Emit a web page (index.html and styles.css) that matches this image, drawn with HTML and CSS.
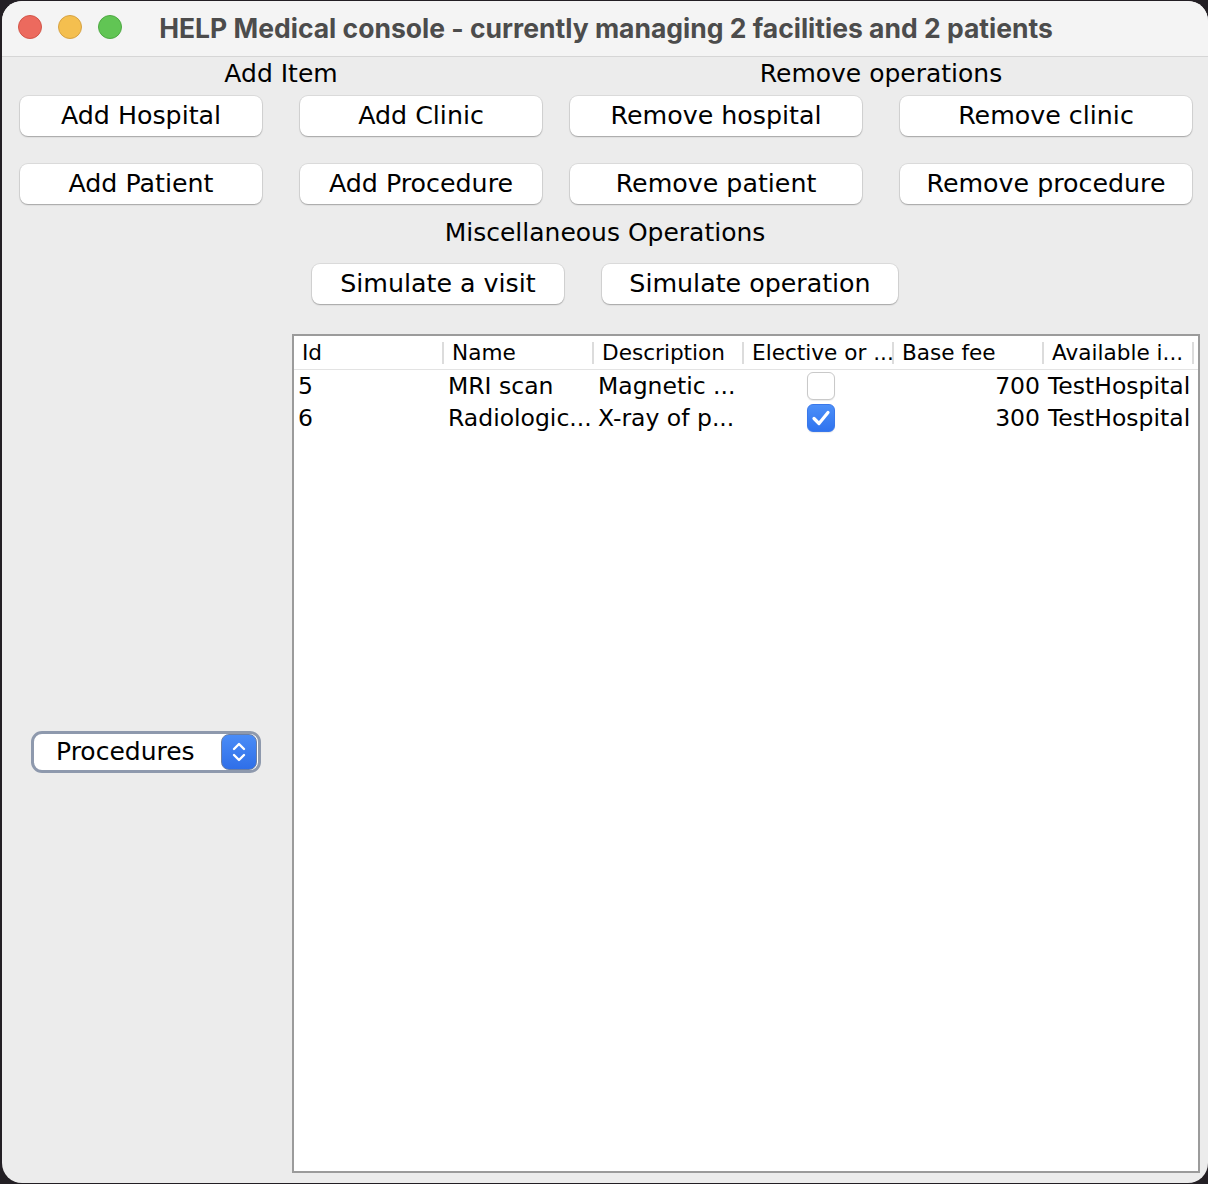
FILE: index.html
```html
<!DOCTYPE html>
<html>
<head>
<meta charset="utf-8">
<title>HELP Medical console</title>
<link rel="stylesheet" href="styles.css">
</head>
<body>
<div class="window">
  <div class="titlebar">
    <div class="lights">
      <span class="light red"></span>
      <span class="light yellow"></span>
      <span class="light green"></span>
    </div>
    <div class="title">HELP Medical console - currently managing 2 facilities and 2 patients</div>
  </div>
  <div class="content">
    <div class="top">
      <div class="group group-add">
        <div class="label">Add Item</div>
        <div class="btn-grid">
          <button class="btn">Add Hospital</button>
          <button class="btn">Add Clinic</button>
          <button class="btn">Add Patient</button>
          <button class="btn">Add Procedure</button>
        </div>
      </div>
      <div class="group group-remove">
        <div class="label">Remove operations</div>
        <div class="btn-grid">
          <button class="btn">Remove hospital</button>
          <button class="btn">Remove clinic</button>
          <button class="btn">Remove patient</button>
          <button class="btn">Remove procedure</button>
        </div>
      </div>
    </div>
    <div class="misc">
      <div class="label">Miscellaneous Operations</div>
      <div class="misc-row">
        <button class="btn btn-visit">Simulate a visit</button>
        <button class="btn btn-op">Simulate operation</button>
      </div>
    </div>
    <div class="bottom">
      <div class="side">
        <div class="combo">
          <span class="combo-text">Procedures</span>
          <span class="combo-btn">
            <svg width="18" height="26" viewBox="0 0 18 26"><path d="M4 10 L9 5 L14 10" fill="none" stroke="#fff" stroke-width="2.4" stroke-linecap="round" stroke-linejoin="round"/><path d="M4 16 L9 21 L14 16" fill="none" stroke="#fff" stroke-width="2.4" stroke-linecap="round" stroke-linejoin="round"/></svg>
          </span>
        </div>
      </div>
      <div class="table">
        <div class="thead">
          <div class="th">Id</div>
          <div class="th">Name</div>
          <div class="th">Description</div>
          <div class="th">Elective or ...</div>
          <div class="th">Base fee</div>
          <div class="th">Available i...</div>
        </div>
        <div class="tr">
          <div class="td">5</div>
          <div class="td">MRI scan</div>
          <div class="td">Magnetic ...</div>
          <div class="td td-check"><span class="check"></span></div>
          <div class="td td-num">700</div>
          <div class="td">TestHospital</div>
        </div>
        <div class="tr">
          <div class="td">6</div>
          <div class="td">Radiologic...</div>
          <div class="td">X-ray of p...</div>
          <div class="td td-check"><span class="check checked"><svg width="20" height="18" viewBox="0 0 20 18"><path d="M3 9.5 L8 14.5 L17 3.5" fill="none" stroke="#fff" stroke-width="3.2" stroke-linecap="round" stroke-linejoin="round"/></svg></span></div>
          <div class="td td-num">300</div>
          <div class="td">TestHospital</div>
        </div>
      </div>
    </div>
  </div>
</div>
</body>
</html>
```
FILE: styles.css
```css
* { box-sizing: border-box; }
html, body { margin: 0; padding: 0; }
body {
  background: #231f24;
  width: 1208px;
  height: 1184px;
  overflow: hidden;
  font-family: "DejaVu Sans", Verdana, sans-serif;
  color: #000;
}
.window {
  margin: 1px 0 0 2px;
  width: 1206px;
  height: 1182px;
  background: #ececec;
  border-radius: 20px;
  overflow: hidden;
  display: flex;
  flex-direction: column;
}
.titlebar {
  position: relative;
  height: 56px;
  flex: none;
  background: #f4f4f4;
  border-bottom: 1px solid #d6d6d6;
  display: flex;
  align-items: center;
  justify-content: center;
}
.lights {
  position: absolute;
  left: 16px;
  top: 14px;
  display: flex;
  gap: 16px;
}
.light {
  width: 24px;
  height: 24px;
  border-radius: 50%;
  display: block;
}
.red { background: #ec6a5e; border: 1px solid #d25548; }
.yellow { background: #f4bf4f; border: 1px solid #d6a243; }
.green { background: #61c554; border: 1px solid #4ea843; }
.title {
  font-family: Inter, "Liberation Sans", sans-serif;
  font-weight: 700;
  font-size: 26.5px;
  color: #4c4c4c;
  margin-left: 2px;
  margin-top: -2px;
}
.content {
  flex: 1;
  display: flex;
  flex-direction: column;
  padding: 0 0 10px 0;
}
.label {
  font-size: 25px;
  text-align: center;
  height: 32px;
  line-height: 32px;
}
.top {
  display: flex;
  padding: 1px 0 0 18px;
  gap: 28px;
}
.group-add { width: 522px; }
.group-remove { width: 622px; }
.btn-grid {
  margin-top: 6px;
  display: grid;
  grid-template-columns: 1fr 1fr;
  column-gap: 38px;
  row-gap: 28px;
}
.btn {
  font-family: "DejaVu Sans", Verdana, sans-serif;
  font-size: 25.3px;
  color: #000;
  background: #fff;
  border: none;
  border-radius: 8px;
  height: 40px;
  padding: 0;
  box-shadow: 0 0 0 1px rgba(0,0,0,0.07), 0 1px 1.5px rgba(0,0,0,0.25);
  line-height: 40px;
}
.misc {
  margin-top: 13px;
  display: flex;
  flex-direction: column;
  align-items: center;
}
.misc-row {
  margin-top: 15px;
  display: flex;
  gap: 38px;
}
.btn-visit { width: 252px; }
.btn-op { width: 296px; }
.bottom {
  flex: 1;
  margin-top: 30px;
  display: flex;
}
.side {
  width: 290px;
  display: flex;
  align-items: center;
  justify-content: center;
  padding-right: 2px;
  padding-bottom: 4px;
}
.combo {
  width: 230px;
  height: 42px;
  border: 3px solid #8e99ad;
  border-radius: 11px;
  background: #fff;
  display: flex;
  align-items: center;
  justify-content: space-between;
  padding: 0 0 0 22px;
}
.combo-text { font-size: 25px; }
.combo-btn {
  width: 36px;
  height: 36px;
  border-radius: 8px;
  background: linear-gradient(#4a8cf7, #2f6fe8);
  border: 1px solid #6a7fa6;
  display: flex;
  align-items: center;
  justify-content: center;
  margin-right: 1px;
}
.table {
  width: 908px;
  background: #fff;
  border: 2px solid #9b9b9b;
  font-size: 23.5px;
}
.thead {
  display: flex;
  height: 34px;
  border-bottom: 1px solid #e3e3e3;
  align-items: center;
  font-size: 21.6px;
}
.th {
  width: 150px;
  padding-left: 8px;
  border-right: 2px solid #dcdcdc;
  height: 22px;
  line-height: 22px;
  white-space: nowrap;
}
.tr {
  display: flex;
  height: 32px;
  align-items: center;
}
.td {
  width: 150px;
  padding: 0 4px;
  white-space: nowrap;
}
.td-num { text-align: right; }
.td-check {
  display: flex;
  justify-content: center;
  padding-right: 0;
}
.check {
  width: 28px;
  height: 28px;
  border-radius: 6px;
  border: 1px solid #c9c9c9;
  background: #fff;
  display: flex;
  align-items: center;
  justify-content: center;
  box-shadow: 0 1px 1px rgba(0,0,0,0.08);
}
.check.checked {
  background: linear-gradient(#4c8ff8, #2f73ef);
  border-color: #3a78ea;
}
```
